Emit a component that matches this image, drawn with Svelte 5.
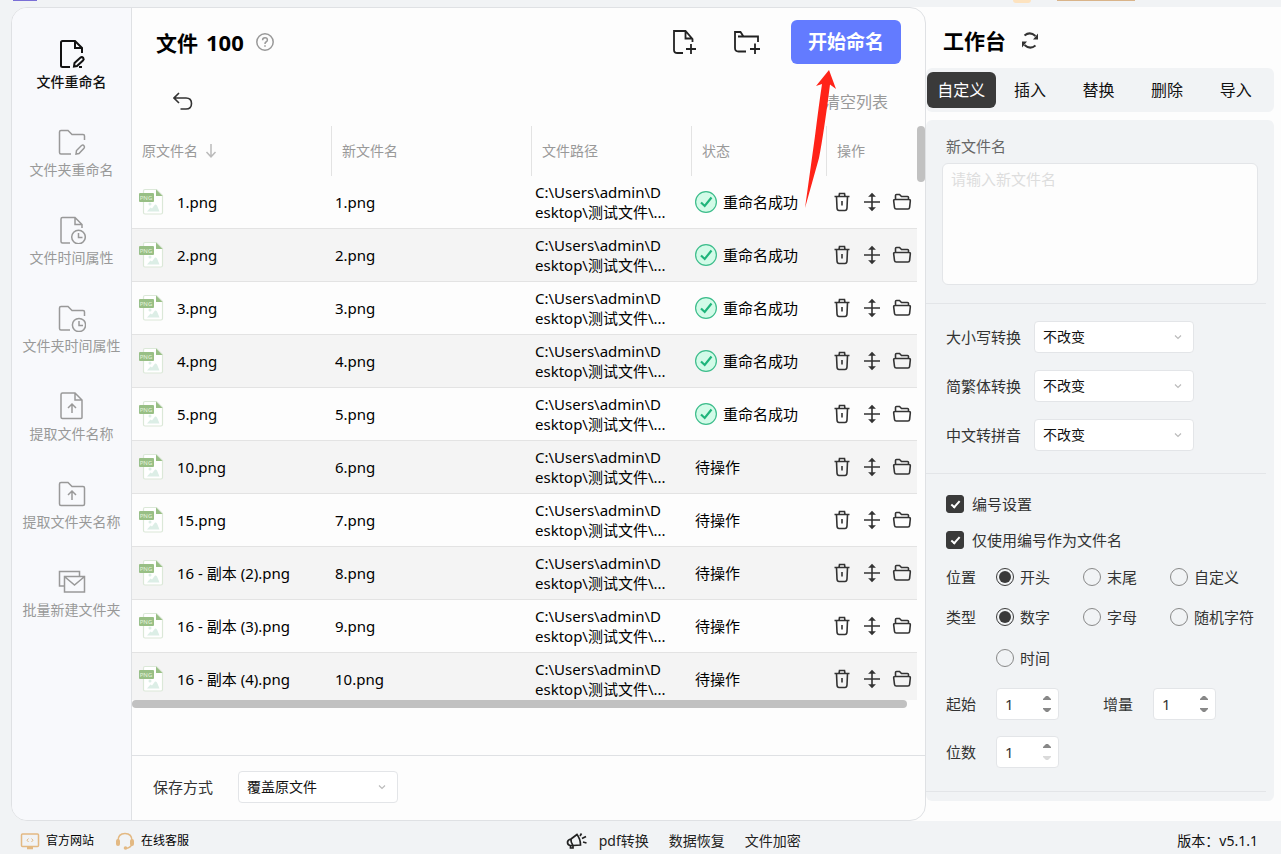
<script lang="ts">
  interface FileRow {
    name: string;
    newName: string;
    done: boolean;
  }

  const FILE_PATH = 'C:\\Users\\admin\\D\nesktop\\测试文件\\...';

  const navItems = [
    { icon: 'file-edit', label: '文件重命名' },
    { icon: 'folder-edit', label: '文件夹重命名' },
    { icon: 'file-clock', label: '文件时间属性' },
    { icon: 'folder-clock', label: '文件夹时间属性' },
    { icon: 'file-up', label: '提取文件名称' },
    { icon: 'folder-up', label: '提取文件夹名称' },
    { icon: 'mail', label: '批量新建文件夹' }
  ];

  const rows: FileRow[] = [
    { name: '1.png', newName: '1.png', done: true },
    { name: '2.png', newName: '2.png', done: true },
    { name: '3.png', newName: '3.png', done: true },
    { name: '4.png', newName: '4.png', done: true },
    { name: '5.png', newName: '5.png', done: true },
    { name: '10.png', newName: '6.png', done: false },
    { name: '15.png', newName: '7.png', done: false },
    { name: '16 - 副本 (2).png', newName: '8.png', done: false },
    { name: '16 - 副本 (3).png', newName: '9.png', done: false },
    { name: '16 - 副本 (4).png', newName: '10.png', done: false }
  ];

  const tabs = ['自定义', '插入', '替换', '删除', '导入'];
  const converts = [
    { id: 'case', label: '大小写转换' },
    { id: 'variant', label: '简繁体转换' },
    { id: 'pinyin', label: '中文转拼音' }
  ];
  const positions = ['开头', '末尾', '自定义'];
  const kinds = ['数字', '字母', '随机字符', '时间'];

  let activeNav = $state(0);
  let activeTab = $state(0);
  let useNumber = $state(true);
  let onlyNumber = $state(true);
  let position = $state('开头');
  let kind = $state('数字');
  let numbers = $state([
    { id: 'start', label: '起始', value: 1, min: 0 },
    { id: 'step', label: '增量', value: 1, min: 0 },
    { id: 'digits', label: '位数', value: 1, min: 1 }
  ]);
</script>

{#snippet navIcon(name: string)}
  <svg class="nav-icon" viewBox="0 0 28 28" aria-hidden="true">
    {#if name === 'file-edit'}
      <path d="M12 27H4.500Q3 27 3 25.500V2.500Q3 1 4.500 1H17L24 8V13M17 1V8H24M21 27H24" />
      <path d="M16 26.500L16.500 23L22.500 17.500Q24 16.500 25.300 18Q26.300 19.300 25 20.500L19 26Z" />
    {:else if name === 'folder-edit'}
      <path d="M13 26H3Q1.500 26 1.500 24.500V4Q1.500 2.500 3 2.500H10L14 6.500H25Q26.500 6.500 26.500 8V12" />
      <path d="M18 26L18.500 22.500L23.500 17.500Q25 16.500 26 17.800Q27 19 26 20.300L21 25.500Z" />
    {:else if name === 'file-clock'}
      <path d="M12 27H4.500Q3 27 3 25.500V3Q3 1.500 4.500 1.500H17L24 8.500V12M17 1.500V8.500H24" />
      <circle cx="20.500" cy="21" r="6.800" />
      <path d="M20.500 17V21.500H24.500" />
    {:else if name === 'folder-clock'}
      <path d="M12 26H3Q1.500 26 1.500 24.500V4Q1.500 2.500 3 2.500H10L14 6.500H25Q26.500 6.500 26.500 8V12" />
      <circle cx="21" cy="21" r="6.600" />
      <path d="M21 17V21.500H25" />
    {:else if name === 'file-up'}
      <path d="M4.500 1H17L24 8V25.500Q24 26.500 23 26.500H4.500Q3 26.500 3 25V2.500Q3 1 4.500 1ZM17 1V8H24" />
      <path d="M14 21V12M10 16L14 12L18 16" />
    {:else if name === 'folder-up'}
      <path d="M3 2.500H10L14 6.500H25Q26.500 6.500 26.500 8V24Q26.500 25.500 25 25.500H3Q1.500 25.500 1.500 24V4Q1.500 2.500 3 2.500Z" />
      <path d="M14 20V11M10 15L14 11L18 15" />
    {:else}
      <path d="M6 18H1.500V3.500H21.500V8M6.500 8.500H26.500V24H6.500ZM7 9L16.500 17L26 9" />
    {/if}
  </svg>
{/snippet}

{#snippet chevron()}
  <svg class="chevron" viewBox="0 0 8 8" aria-hidden="true"><path d="M1 2.500L4 5.500L7 2.500" /></svg>
{/snippet}

{#snippet radio(group: string, value: string, current: string, pick: (v: string) => void)}
  <label class="radio">
    <input type="radio" name={group} checked={current === value} onchange={() => pick(value)} />
    <span>{value}</span>
  </label>
{/snippet}

<div class="app">
  <div class="strip">
    <span class="strip-logo"></span>
    <span class="strip-coin"></span>
    <span class="strip-vip"></span>
  </div>

  <div class="body">
    <div class="card">
      <nav class="sidebar">
        {#each navItems as item, i}
          <button type="button" class="nav-item" class:active={activeNav === i} onclick={() => (activeNav = i)}>
            {@render navIcon(item.icon)}
            <span>{item.label}</span>
          </button>
        {/each}
      </nav>

      <main class="files">
        <header class="files-head">
          <h1>文件<span class="count">100</span></h1>
          <button type="button" class="icon-btn" aria-label="帮助">
            <svg class="help" viewBox="0 0 18 18">
              <circle cx="9" cy="9" r="8.200" />
              <path d="M6.600 7.200Q6.600 4.800 9 4.800Q11.400 4.800 11.400 7Q11.400 8.300 10 9Q9 9.600 9 11M9 12.300V13.800" />
            </svg>
          </button>
          <div class="head-actions">
            <button type="button" class="icon-btn" aria-label="添加文件">
              <svg class="add-icon" viewBox="0 0 28 28">
                <path d="M12 25H6.500Q3 25 3 22V3H14.500L21.500 11V14M14.500 3V10.500H21.500M20 16V26M15 21H25" />
              </svg>
            </button>
            <button type="button" class="icon-btn" aria-label="添加文件夹">
              <svg class="add-icon" viewBox="0 0 28 28">
                <path d="M13 23.500H5.500Q2 23.500 2 20V4H7.500L10.500 8.500H25V14M5 8.500H11M22 15.500V26M17 21H27" />
              </svg>
            </button>
            <button type="button" class="start">开始命名</button>
          </div>
        </header>

        <div class="toolbar">
          <button type="button" class="icon-btn" aria-label="撤销">
            <svg class="undo" viewBox="0 0 20 20">
              <path d="M6 1L1 6L6 11M1.500 6H13Q18.500 6 18.500 11.500Q18.500 17 13 17H7.500" />
            </svg>
          </button>
          <button type="button" class="clear">清空列表</button>
        </div>

        <div class="table-wrap">
          <div class="table-clip">
            <table>
              <colgroup>
                <col />
                <col />
                <col class="col-path" />
                <col class="col-status" />
                <col class="col-ops" />
              </colgroup>
              <thead>
                <tr>
                  <th>
                    原文件名
                    <svg class="sort" viewBox="0 0 12 14" aria-hidden="true"><path d="M6 0V12.500M1.500 8L6 12.800L10.500 8" /></svg>
                  </th>
                  <th>新文件名</th>
                  <th>文件路径</th>
                  <th>状态</th>
                  <th>操作</th>
                </tr>
              </thead>
              <tbody>
                {#each rows as row}
                  <tr>
                    <td>
                      <div class="name">
                        <svg class="png" viewBox="0 0 26 28" aria-hidden="true">
                          <path class="sheet" d="M6 1.500H17.500L23.500 7.500V24.500Q23.500 26 22 26H6Q4.500 26 4.500 24.500V3Q4.500 1.500 6 1.500Z" />
                          <path class="fold" d="M17 1.500L23.500 8H17Z" />
                          <path class="hill" d="M8 23.500L11.500 19.500L13 20.500L16 16.500Q17 16 18 17.500L20.500 23.500Z" />
                          <circle class="hill" cx="11" cy="16" r="1.500" />
                          <rect class="tag" x="0" y="5" width="15" height="9" rx="1" />
                          <text x="7" y="12">PNG</text>
                        </svg>
                        <span>{row.name}</span>
                      </div>
                    </td>
                    <td>{row.newName}</td>
                    <td class="path">{FILE_PATH}</td>
                    <td>
                      <div class="status">
                        {#if row.done}
                          <svg class="ok" viewBox="0 0 22 22" aria-hidden="true">
                            <circle cx="11" cy="11" r="10.400" />
                            <path d="M6 11.500L9.700 15L16.500 6.500" />
                          </svg>
                          <span>重命名成功</span>
                        {:else}
                          <span>待操作</span>
                        {/if}
                      </div>
                    </td>
                    <td>
                      <div class="ops">
                        <button type="button" class="icon-btn" aria-label="删除">
                          <svg viewBox="0 0 20 20">
                            <path d="M2.500 4.500H17.500M7 4.500L7.500 1.500H12.500L13 4.500M4.500 4.500L5 16Q5.200 18.500 7 18.500H13Q14.800 18.500 15 16L15.500 4.500M10 9V13.500" />
                          </svg>
                        </button>
                        <button type="button" class="icon-btn" aria-label="移动">
                          <svg viewBox="0 0 20 20">
                            <path d="M2 10H18M10 2V18M8 4L10 2L12 4ZM8 16L10 18L12 16Z" />
                          </svg>
                        </button>
                        <button type="button" class="icon-btn" aria-label="打开文件夹">
                          <svg viewBox="0 0 20 20">
                            <path d="M3.500 7V3.500Q3.500 2.500 4.500 2.500H7.500L9.500 4.500H15.500Q16.500 4.500 16.500 5.500V7M3 7.500H17Q18.500 7.500 18.300 9L17.600 15.500Q17.400 17 16 17H4.300Q2.700 17 2.500 15.500L1.700 9Q1.500 7.500 3 7.500Z" />
                          </svg>
                        </button>
                      </div>
                    </td>
                  </tr>
                {/each}
              </tbody>
            </table>
          </div>
          <span class="bar bar-y"></span>
          <span class="bar bar-x"></span>
        </div>

        <footer class="save">
          <label for="save-mode">保存方式</label>
          <span class="select">
            <select id="save-mode"><option>覆盖原文件</option></select>
            {@render chevron()}
          </span>
        </footer>
      </main>

      <svg class="pointer" viewBox="0 0 34 140" aria-hidden="true">
        <path d="M25 0L32 19L26 14.500Q20 62 15 88L1 138L11 66Q15 34 18 14L12 16Z" />
      </svg>
    </div>

    <aside class="workbench">
      <div class="wb-head">
        <h2>工作台</h2>
        <button type="button" class="icon-btn" aria-label="重置">
          <svg class="refresh" viewBox="0 0 18 18">
            <path d="M3.500 3.500Q9 -1 14.500 4M14.500 13.500Q9 18 3.500 13" />
            <path class="tip" d="M17 1.500V7.500H12ZM1 15.500V9.500H6Z" />
          </svg>
        </button>
      </div>

      <div class="tabs" role="tablist">
        {#each tabs as tab, i}
          <button type="button" role="tab" aria-selected={activeTab === i} class:active={activeTab === i} onclick={() => (activeTab = i)}>
            {tab}
          </button>
        {/each}
      </div>

      <div class="panel">
        <section class="new-name">
          <label for="new-name">新文件名</label>
          <textarea id="new-name" placeholder="请输入新文件名"></textarea>
        </section>

        <section class="converts">
          {#each converts as item}
            <div class="field">
              <label for={item.id}>{item.label}</label>
              <span class="select">
                <select id={item.id}><option>不改变</option></select>
                {@render chevron()}
              </span>
            </div>
          {/each}
        </section>

        <section class="numbering">
          <label class="check"><input type="checkbox" bind:checked={useNumber} /><span>编号设置</span></label>
          <label class="check"><input type="checkbox" bind:checked={onlyNumber} /><span>仅使用编号作为文件名</span></label>

          <div class="radios" role="radiogroup" aria-label="位置">
            <span class="radios-label">位置</span>
            {#each positions as p}
              {@render radio('position', p, position, (v) => (position = v))}
            {/each}
          </div>
          <div class="radios kinds" role="radiogroup" aria-label="类型">
            <span class="radios-label">类型</span>
            {#each kinds as k}
              {@render radio('kind', k, kind, (v) => (kind = v))}
            {/each}
          </div>

          <div class="numbers">
            {#each numbers as n}
              <div class="number">
                <label for={n.id}>{n.label}</label>
                <span class="stepper">
                  <input id={n.id} type="number" min={n.min} bind:value={n.value} />
                  <span class="arrows">
                    <button type="button" aria-label="增加" onclick={() => n.value++}>
                      <svg viewBox="0 0 8 4"><path d="M0 4V3L3 0H5L8 3V4Z" /></svg>
                    </button>
                    <button type="button" aria-label="减少" disabled={n.value <= n.min} onclick={() => n.value--}>
                      <svg viewBox="0 0 8 4"><path d="M0 0V1L3 4H5L8 1V0Z" /></svg>
                    </button>
                  </span>
                </span>
              </div>
            {/each}
          </div>
        </section>
      </div>
    </aside>
  </div>

  <footer class="statusbar">
    <div class="links">
      <a href="#site">
        <svg class="foot-icon" viewBox="0 0 20 18" aria-hidden="true">
          <rect x="1.500" y="2" width="17" height="12.500" rx="1" />
          <path d="M8.500 6.500L7 8.200L8.500 10M11.500 6.500L13 8.200L11.500 10" stroke-width="1" />
          <path d="M7 16H13" stroke-width="2.500" />
        </svg>
        官方网站
      </a>
      <a href="#service">
        <svg class="foot-icon" viewBox="0 0 20 18" aria-hidden="true">
          <path d="M3 9Q3 1.500 10 1.500Q17 1.500 17 9M17 12Q16 15.500 11 16.500" />
          <rect class="solid" x="1" y="7" width="4" height="7" rx="2" />
          <rect class="solid" x="15" y="7" width="4" height="7" rx="2" />
          <circle class="solid" cx="10.500" cy="16" r="1.800" />
        </svg>
        在线客服
      </a>
    </div>
    <div class="promo">
      <svg class="horn" viewBox="0 0 22 18" aria-hidden="true">
        <path d="M5 7L11 2.500Q14.500 7 14.500 13L7 13.500M5 7Q2 7.500 1.500 10Q1.500 13 4 13.500L7 13.500M5 7Q4.500 10 7 13.500M4.500 13.500V16H7V13.500M14 4L15.500 1.500M16 6.500L20 4.500M17 10L20.500 11" />
      </svg>
      <a href="#pdf">pdf转换</a>
      <a href="#recover">数据恢复</a>
      <a href="#encrypt">文件加密</a>
    </div>
    <span class="version">版本：v5.1.1</span>
  </footer>
</div>

<style>
  :global(body) {
    margin: 0;
  }

  .app {
    --line: #dfe1e4;
    --soft: #f1f3f5;
    --dark: #3a3a3a;
    display: flex;
    flex-direction: column;
    height: 100vh;
    overflow: hidden;
    background: var(--soft);
    color: #111;
    font-family: "Noto Sans", "Noto Sans CJK SC", sans-serif;
    font-size: 15px;
    line-height: 20px;
  }

  .app *,
  .app *::before {
    box-sizing: border-box;
  }

  button,
  input,
  select,
  textarea {
    margin: 0;
    font: inherit;
    color: inherit;
  }

  button {
    padding: 0;
    border: none;
    background: none;
    cursor: pointer;
  }

  svg {
    display: block;
    fill: none;
    stroke: currentColor;
  }

  h1,
  h2 {
    margin: 0;
    font-size: 21px;
    line-height: 28px;
    font-weight: 700;
    color: #000;
  }

  .count {
    margin-left: 8px;
    font-size: 22px;
  }

  a {
    color: inherit;
    text-decoration: none;
  }

  .icon-btn {
    display: flex;
    align-items: center;
    justify-content: center;
  }

  /* window title strip */
  .strip {
    display: flex;
    flex: none;
    height: 7px;
    padding: 0 146px 0 13px;
  }

  .strip-logo {
    width: 24px;
    height: 1px;
    background: #7a6fd6;
  }

  .strip-coin {
    width: 18px;
    height: 3px;
    margin-left: auto;
    border-radius: 0 0 9px 9px;
    background: #fde3c0;
  }

  .strip-vip {
    width: 78px;
    height: 1px;
    margin-left: 26px;
    background: #d9b48a;
  }

  .body {
    display: flex;
    flex: 1;
    min-height: 0;
  }

  .card {
    position: relative;
    z-index: 1;
    display: flex;
    flex: 1;
    min-width: 0;
    margin-left: 11px;
    border: 1px solid var(--line);
    border-radius: 16px;
    background: #fdfdfd;
  }

  /* sidebar */
  .sidebar {
    display: flex;
    flex: none;
    flex-direction: column;
    gap: 36px;
    width: 120px;
    padding-top: 32px;
    border-right: 1px solid var(--line);
    border-radius: 15px 0 0 15px;
    background: #f8f9fc;
  }

  .nav-item {
    display: flex;
    flex-direction: column;
    align-items: center;
    gap: 4px;
    color: #999;
    font-size: 14px;
  }

  .nav-item.active {
    color: #111;
    font-weight: 500;
  }

  .nav-icon {
    width: 28px;
    height: 28px;
    stroke-width: 1.5;
  }

  .active .nav-icon {
    stroke-width: 2;
  }

  /* file list */
  .files {
    display: flex;
    flex: 1;
    flex-direction: column;
    min-width: 0;
  }

  .files-head {
    display: flex;
    align-items: center;
    gap: 12px;
    padding: 12px 24px 0;
  }

  .help {
    width: 18px;
    height: 18px;
    color: #999;
    stroke-width: 1.5;
  }

  .head-actions {
    display: flex;
    align-items: center;
    gap: 34px;
    margin-left: auto;
  }

  .add-icon {
    width: 28px;
    height: 28px;
    color: #222;
    stroke-width: 1.8;
  }

  .start {
    width: 110px;
    height: 44px;
    margin-left: -4px;
    border-radius: 6px;
    background: #637bff;
    color: #fff;
    font-size: 19px;
    font-weight: 700;
  }

  .toolbar {
    display: flex;
    align-items: center;
    justify-content: space-between;
    height: 62px;
    padding: 14px 37px 0 41px;
  }

  .undo {
    width: 20px;
    height: 20px;
    color: #333;
    stroke-width: 1.6;
  }

  .clear {
    color: #999;
    font-size: 16px;
  }

  .table-wrap {
    position: relative;
    flex: 1;
    min-height: 0;
    padding: 0 8px 8px 0;
  }

  .table-clip {
    height: 100%;
    overflow: hidden;
  }

  table {
    width: 100%;
    border-collapse: separate;
    border-spacing: 0;
    table-layout: fixed;
  }

  .col-path {
    width: 160px;
  }

  .col-status {
    width: 135px;
  }

  .col-ops {
    width: 90px;
  }

  th {
    height: 50px;
    padding: 0 10px;
    border-right: 1px solid #e3e3e3;
    color: #999;
    font-size: 14px;
    font-weight: 400;
    text-align: left;
  }

  th:last-child {
    border-right: none;
  }

  .sort {
    display: inline-block;
    width: 12px;
    height: 14px;
    margin-left: 3px;
    color: #bbb;
    stroke-width: 1.5;
    vertical-align: -2px;
  }

  td {
    height: 53px;
    padding: 0 3px;
    border-bottom: 1px solid #e3e3e3;
    color: #000;
    white-space: nowrap;
  }

  tbody tr:nth-child(even) {
    background: #f4f4f4;
  }

  .path {
    white-space: pre;
  }

  .name,
  .status,
  .ops {
    display: flex;
    align-items: center;
  }

  .name {
    gap: 12px;
    padding-left: 4px;
  }

  .png {
    width: 26px;
    height: 28px;
    stroke: none;
  }

  .sheet {
    fill: #fff;
    stroke: #dbe8d8;
    stroke-width: 1.2;
  }

  .fold,
  .tag {
    fill: #98bf85;
  }

  .hill {
    fill: #dceee6;
  }

  .png text {
    fill: #e4f2dc;
    font-size: 6px;
    text-anchor: middle;
  }

  .status {
    gap: 6px;
  }

  .ok {
    width: 22px;
    height: 22px;
    fill: #d2fbe8;
    stroke: #3cbd8b;
    stroke-width: 1.2;
  }

  .ok path {
    fill: none;
    stroke: #1fb57b;
    stroke-width: 2.2;
  }

  .ops {
    justify-content: center;
    gap: 10px;
    color: #333;
  }

  .ops svg {
    width: 20px;
    height: 20px;
    stroke-width: 1.6;
  }

  .bar {
    position: absolute;
    border-radius: 4px;
    background: #c1c1c1;
  }

  .bar-y {
    top: 0;
    right: 0;
    width: 8px;
    height: 56px;
  }

  .bar-x {
    bottom: 0;
    left: 0;
    right: 18px;
    height: 8px;
  }

  .save {
    display: flex;
    align-items: center;
    gap: 25px;
    height: 65px;
    margin-top: 47px;
    padding: 0 0 2px 21px;
    border-top: 1px solid var(--line);
    color: #333;
  }

  .select {
    position: relative;
    display: block;
    width: 160px;
  }

  select {
    display: block;
    width: 100%;
    height: 32px;
    padding: 0 24px 0 8px;
    appearance: none;
    border: 1px solid #e3e5e8;
    border-radius: 4px;
    background: #fff;
    color: #111;
    font-size: 14px;
  }

  .chevron {
    position: absolute;
    top: 12px;
    right: 12px;
    width: 8px;
    height: 8px;
    color: #bbb;
    stroke-width: 1.2;
    pointer-events: none;
  }

  .pointer {
    position: absolute;
    top: 62px;
    right: 87px;
    width: 34px;
    height: 140px;
    fill: #ff2318;
    stroke: none;
    pointer-events: none;
  }

  /* workbench */
  .workbench {
    flex: none;
    width: 371px;
    margin-left: -16px;
    padding: 20px 7px 0 16px;
    background: #fdfdfd;
  }

  .wb-head {
    display: flex;
    align-items: center;
    gap: 15px;
    padding-left: 17px;
  }

  .refresh {
    width: 18px;
    height: 18px;
    color: #333;
    stroke-width: 2;
  }

  .tip {
    fill: currentColor;
    stroke: none;
  }

  .tabs {
    display: grid;
    grid-template-columns: repeat(5, 1fr);
    margin-top: 13px;
    padding: 4px 4px 4px 1px;
    border-radius: 6px;
    background: var(--soft);
  }

  .tabs button {
    height: 36px;
    border-radius: 6px;
    color: #111;
    font-size: 16px;
  }

  .tabs .active {
    background: var(--dark);
    color: #fff;
  }

  .panel {
    margin-top: 8px;
    padding: 0 8px 9px 0;
    border-radius: 6px;
    background: var(--soft);
    color: #333;
  }

  section {
    border-bottom: 1px solid #e3e5e8;
  }

  .new-name {
    padding: 16px 8px 18px 16px;
  }

  .new-name label {
    display: block;
    padding-left: 4px;
    color: #666;
  }

  textarea {
    display: block;
    width: 100%;
    height: 122px;
    margin-top: 7px;
    padding: 5px 8px;
    border: 1px solid #e3e5e8;
    border-radius: 6px;
    background: #fdfdfd;
    resize: none;
  }

  textarea::placeholder {
    color: #ddd;
  }

  .converts {
    display: flex;
    flex-direction: column;
    gap: 17px;
    padding: 17px 20px 22px;
  }

  .field {
    display: flex;
    align-items: center;
    gap: 13px;
  }

  .numbering {
    padding: 20px 0 23px 20px;
  }

  .check,
  .radio {
    display: flex;
    align-items: center;
    cursor: pointer;
    white-space: nowrap;
  }

  .check {
    gap: 8px;
    margin-bottom: 16px;
  }

  .check input,
  .radio input {
    display: grid;
    flex: none;
    place-items: center;
    width: 18px;
    height: 18px;
    appearance: none;
  }

  .check input {
    border: 1px solid var(--dark);
    border-radius: 3px;
  }

  .check input:checked {
    background: var(--dark);
  }

  .check input:checked::before {
    content: "";
    width: 5px;
    height: 9px;
    margin-top: -2px;
    border: solid #fff;
    border-width: 0 2px 2px 0;
    transform: rotate(42deg);
  }

  .radio {
    gap: 6px;
  }

  .radio input {
    border: 1px solid #888;
    border-radius: 50%;
  }

  .radio input:checked {
    border-color: var(--dark);
  }

  .radio input:checked::before {
    content: "";
    width: 12px;
    height: 12px;
    border-radius: 50%;
    background: var(--dark);
  }

  .radios {
    display: grid;
    grid-template-columns: 50px 87px 87px 1fr;
    row-gap: 21px;
    margin-top: 17px;
  }

  .kinds {
    margin-top: 20px;
  }

  .kinds .radio:last-child {
    grid-column: 2;
  }

  .numbers {
    display: grid;
    grid-template-columns: 157px 1fr;
    row-gap: 16px;
    margin-top: 20px;
  }

  .number {
    display: flex;
    align-items: center;
    gap: 20px;
  }

  .stepper {
    display: flex;
    width: 63px;
    height: 32px;
    padding: 0 7px 0 8px;
    border: 1px solid #e3e5e8;
    border-radius: 4px;
    background: #fff;
  }

  .stepper input {
    flex: 1;
    width: 0;
    min-width: 0;
    padding: 0;
    border: none;
    outline: none;
    background: none;
    appearance: textfield;
  }

  .stepper input::-webkit-inner-spin-button {
    appearance: none;
  }

  .arrows {
    display: flex;
    flex-direction: column;
    justify-content: center;
    gap: 8px;
  }

  .arrows svg {
    width: 8px;
    height: 4px;
    fill: #888;
    stroke: none;
  }

  .arrows button:disabled {
    opacity: 0.3;
  }

  /* status bar */
  .statusbar {
    display: flex;
    flex: none;
    align-items: center;
    justify-content: space-between;
    height: 33px;
    padding: 7px 23px 0 20px;
    font-size: 14px;
  }

  .links,
  .links a,
  .promo {
    display: flex;
    align-items: center;
  }

  .links {
    gap: 21px;
    color: #000;
    font-size: 12px;
  }

  .links a {
    gap: 6px;
  }

  .foot-icon {
    width: 20px;
    height: 18px;
    stroke: #e3b983;
    stroke-width: 1.5;
  }

  .solid {
    fill: #e3b983;
    stroke: none;
  }

  .promo {
    gap: 20px;
    color: #222;
  }

  .horn {
    width: 22px;
    height: 18px;
    margin-right: -9px;
    stroke-width: 1.7;
  }
</style>
